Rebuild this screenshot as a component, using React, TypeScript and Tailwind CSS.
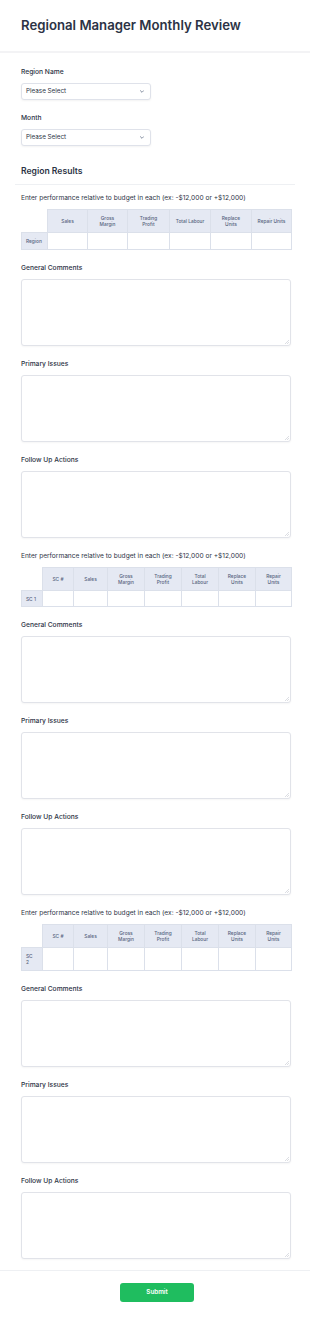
import React from 'react'

const cols1: React.ReactNode[] = [
  'Sales',
  <>Gross<br />Margin</>,
  <>Trading<br />Profit</>,
  'Total Labour',
  <>Replace<br />Units</>,
  'Repair Units',
]
const cols2: React.ReactNode[] = [
  'SC #',
  'Sales',
  <>Gross<br />Margin</>,
  <>Trading<br />Profit</>,
  <>Total<br />Labour</>,
  <>Replace<br />Units</>,
  <>Repair<br />Units</>,
]

function Label({ children }: { children: React.ReactNode }) {
  return <div className="h-[9px] mb-[6px] text-[6.7px] leading-[9px] font-medium text-[#2c3345]">{children}</div>
}

function SelectField({ label }: { label: string }) {
  return (
    <div className="mt-[14px]">
      <Label>{label}</Label>
      <div className="w-[130px] h-[17px] border border-[#dfe2ea] rounded-[3px] shadow-[0_1px_2px_rgba(0,0,0,0.05)] flex items-center justify-between pl-[4px] pr-[6px] bg-white">
        <span className="text-[6.3px] text-[#2c3345]">Please Select</span>
        <svg width="4" height="3" viewBox="0 0 10 6" fill="none">
          <path d="M1 1l4 4 4-4" stroke="#57647e" strokeWidth="1.8" strokeLinecap="round" strokeLinejoin="round" />
        </svg>
      </div>
    </div>
  )
}

function TextField({ label }: { label: string }) {
  return (
    <div className="mt-[14px]">
      <Label>{label}</Label>
      <div className="relative">
        <textarea className="block w-full h-[67px] border border-[#e1e3e9] rounded-[3px] bg-white outline-none resize-none shadow-[0_1px_2px_rgba(0,0,0,0.04)]" />
        {/* faint resize grip */}
        <svg className="absolute right-[2px] bottom-[2px] pointer-events-none" width="4" height="4" viewBox="0 0 4 4">
          <path d="M4 0L0 4M4 2L2 4" stroke="#c4c8d0" strokeWidth="0.6" />
        </svg>
      </div>
    </div>
  )
}

function PerfTable({ cols, widths, rowLabel, dataHeight }: { cols: React.ReactNode[]; widths: number[]; rowLabel: React.ReactNode; dataHeight: number }) {
  return (
    <div className="mt-[14px]">
      <div className="h-[9px] mb-[6px] text-[6.6px] leading-[9px] text-[#2c3345]">
        Enter performance relative to budget in each (ex: -$12,000 or +$12,000)
      </div>
      <table className="w-full table-fixed border-collapse">
        <colgroup>
          {widths.map((w, i) => (
            <col key={i} style={{ width: w }} />
          ))}
        </colgroup>
        <thead>
          <tr className="h-[23px]">
            <th className="p-0"></th>
            {cols.map((c, i) => (
              <th key={i} className="border border-[#dbe0ea] bg-[#e5e9f3] text-[4.8px] leading-[6px] font-medium text-[#57647e] px-0 text-center whitespace-nowrap">
                {c}
              </th>
            ))}
          </tr>
        </thead>
        <tbody>
          <tr style={{ height: dataHeight }}>
            <td className="border border-[#dbe0ea] bg-[#e5e9f3] text-[4.8px] leading-[6px] font-medium text-[#57647e] px-[4px] text-left whitespace-nowrap">
              {rowLabel}
            </td>
            {cols.map((_, i) => (
              <td key={i} className="border border-[#dbe0ea] bg-white"></td>
            ))}
          </tr>
        </tbody>
      </table>
    </div>
  )
}

function Group({ table }: { table: React.ReactNode }) {
  return (
    <>
      {table}
      <TextField label="General Comments" />
      <TextField label="Primary Issues" />
      <TextField label="Follow Up Actions" />
    </>
  )
}

export default function App() {
  return (
    <main className="w-[310px] min-h-[1317px] bg-white font-['Inter',sans-serif]">
      <header className="h-[53px] border-b-2 border-[#f3f3f5] flex items-center px-[21px]">
        <h1 className="text-[13.2px] font-semibold text-[#2c3345] pt-[1px]">Regional Manager Monthly Review</h1>
      </header>

      <div className="pl-[21px] pr-[19px] pt-[1px]">
        <SelectField label="Region Name" />
        <SelectField label="Month" />

        <div className="mt-[19px] h-[12px] text-[8.6px] leading-[12px] font-semibold text-[#2c3345]">Region Results</div>
        <div className="mt-[7px] -ml-[6px] -mr-[4px] border-t border-[#eef0f3]"></div>
        <div className="-mt-[5px]">
          <Group table={<PerfTable cols={cols1} widths={[26, 40, 40, 42, 41, 41, 40]} rowLabel="Region" dataHeight={17} />} />
          <Group table={<PerfTable cols={cols2} widths={[21, 31, 34, 37, 37, 37, 37, 36]} rowLabel="SC 1" dataHeight={16} />} />
          <Group table={<PerfTable cols={cols2} widths={[21, 31, 34, 37, 37, 37, 37, 36]} rowLabel={<>SC<br />2</>} dataHeight={23} />} />
        </div>
      </div>

      <div className="mt-[11px] border-t border-[#eef0f3] flex justify-center pl-[4px] pt-[12px] pb-[17px]">
        <button className="w-[74px] h-[19px] rounded-[3px] bg-[#1fbd5f] text-white text-[6.3px] font-semibold">Submit</button>
      </div>
    </main>
  )
}
